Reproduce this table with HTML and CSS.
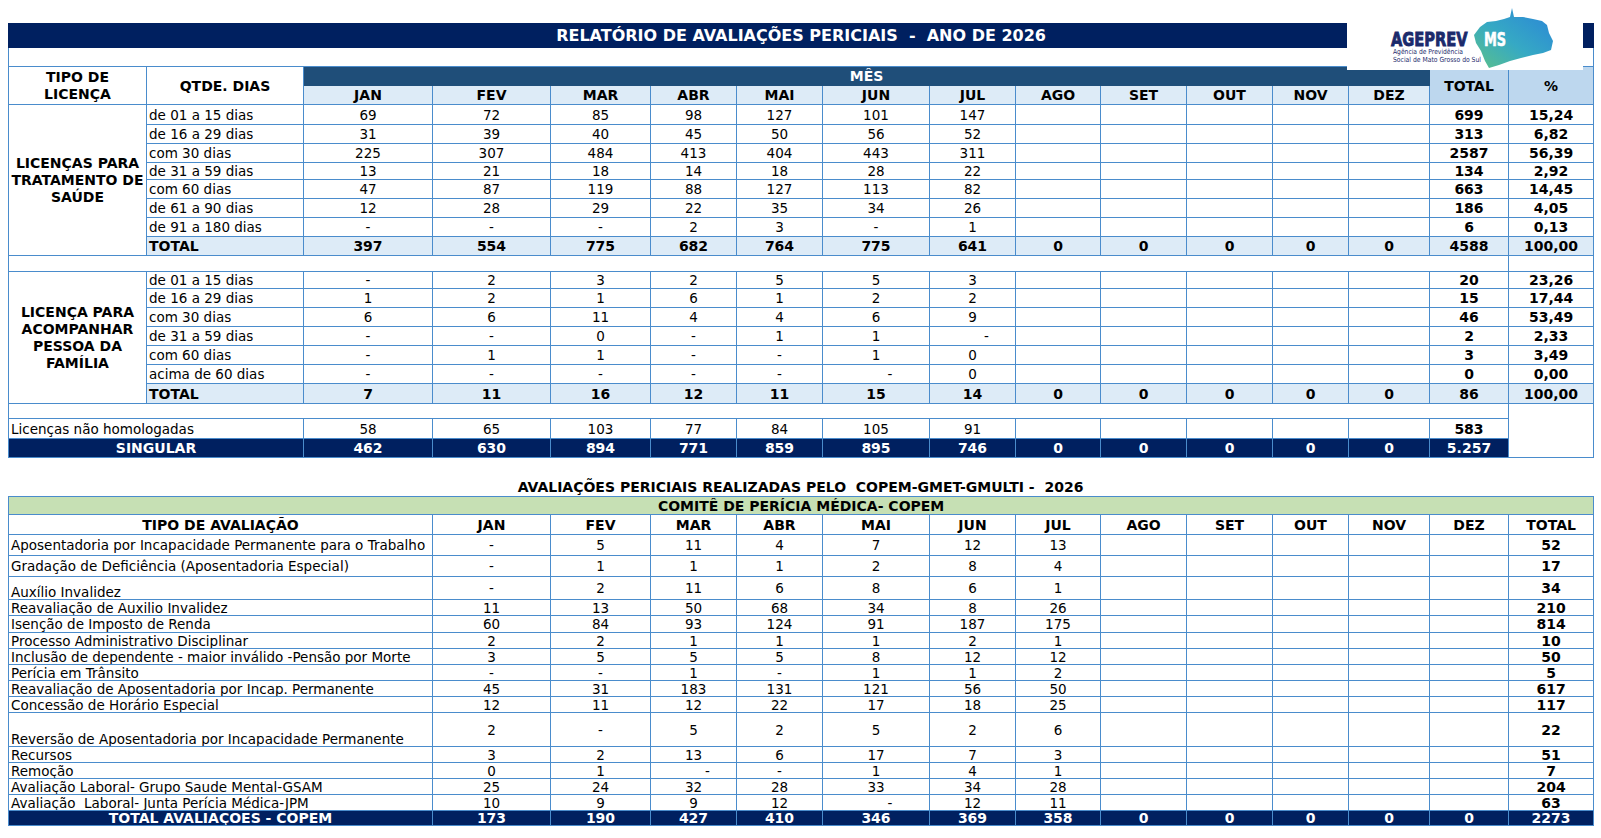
FILE: index.html
```html
<!DOCTYPE html>
<html lang="pt-BR">
<head>
<meta charset="utf-8">
<title>Relatório de Avaliações Periciais - 2026</title>
<link rel="stylesheet" href="styles.css">
</head>
<body>
<div class="page">
  <div class="report">
    <table class="grid">
      <colgroup>
        <col class="c-tipo"><col class="c-qtd"><col class="c-jan"><col class="c-fev"><col class="c-mar"><col class="c-abr"><col class="c-mai"><col class="c-jun"><col class="c-jul"><col class="c-ago"><col class="c-set"><col class="c-out"><col class="c-nov"><col class="c-dez"><col class="c-tot"><col class="c-pct">
      </colgroup>
      <tr class="h24"><td colspan="16" class="title">RELATÓRIO DE AVALIAÇÕES PERICIAIS &nbsp;- &nbsp;ANO DE 2026</td></tr>
      <tr class="h19"><td colspan="16"></td></tr>
      <tr class="h19">
        <th rowspan="2" class="grp">TIPO DE<br>LICENÇA</th>
        <th rowspan="2">QTDE. DIAS</th>
        <th colspan="12" class="mes">MÊS</th>
        <th rowspan="2" class="toth">TOTAL</th>
        <th rowspan="2" class="toth">%</th>
      </tr>
      <tr class="h19 months">
        <th>JAN</th><th>FEV</th><th>MAR</th><th>ABR</th><th>MAI</th><th>JUN</th><th>JUL</th><th>AGO</th><th>SET</th><th>OUT</th><th>NOV</th><th>DEZ</th>
      </tr>

      <tr class="h20">
        <td rowspan="8" class="grp">LICENÇAS PARA<br>TRATAMENTO DE<br>SAÚDE</td>
        <td class="lbl">de 01 a 15 dias</td>
        <td>69</td><td>72</td><td>85</td><td>98</td><td>127</td><td>101</td><td>147</td>
        <td></td><td></td><td></td><td></td><td></td>
        <td class="b">699</td><td class="b">15,24</td>
      </tr>
      <tr class="h19">
        <td class="lbl">de 16 a 29 dias</td>
        <td>31</td><td>39</td><td>40</td><td>45</td><td>50</td><td>56</td><td>52</td>
        <td></td><td></td><td></td><td></td><td></td>
        <td class="b">313</td><td class="b">6,82</td>
      </tr>
      <tr class="h19">
        <td class="lbl">com 30 dias</td>
        <td>225</td><td>307</td><td>484</td><td>413</td><td>404</td><td>443</td><td>311</td>
        <td></td><td></td><td></td><td></td><td></td>
        <td class="b">2587</td><td class="b">56,39</td>
      </tr>
      <tr class="h17">
        <td class="lbl">de 31 a 59 dias</td>
        <td>13</td><td>21</td><td>18</td><td>14</td><td>18</td><td>28</td><td>22</td>
        <td></td><td></td><td></td><td></td><td></td>
        <td class="b">134</td><td class="b">2,92</td>
      </tr>
      <tr class="h19">
        <td class="lbl">com 60 dias</td>
        <td>47</td><td>87</td><td>119</td><td>88</td><td>127</td><td>113</td><td>82</td>
        <td></td><td></td><td></td><td></td><td></td>
        <td class="b">663</td><td class="b">14,45</td>
      </tr>
      <tr class="h19">
        <td class="lbl">de 61 a 90 dias</td>
        <td>12</td><td>28</td><td>29</td><td>22</td><td>35</td><td>34</td><td>26</td>
        <td></td><td></td><td></td><td></td><td></td>
        <td class="b">186</td><td class="b">4,05</td>
      </tr>
      <tr class="h19">
        <td class="lbl">de 91 a 180 dias</td>
        <td>-</td><td>-</td><td>-</td><td>2</td><td>3</td><td>-</td><td>1</td>
        <td></td><td></td><td></td><td></td><td></td>
        <td class="b">6</td><td class="b">0,13</td>
      </tr>
      <tr class="h19 tot">
        <td class="lbl">TOTAL</td>
        <td>397</td><td>554</td><td>775</td><td>682</td><td>764</td><td>775</td><td>641</td>
        <td>0</td><td>0</td><td>0</td><td>0</td><td>0</td>
        <td>4588</td><td>100,00</td>
      </tr>

      <tr class="h16"><td colspan="15"></td><td></td></tr>

      <tr class="h17">
        <td rowspan="7" class="grp">LICENÇA PARA<br>ACOMPANHAR<br>PESSOA DA<br>FAMÍLIA</td>
        <td class="lbl">de 01 a 15 dias</td>
        <td>-</td><td>2</td><td>3</td><td>2</td><td>5</td><td>5</td><td>3</td>
        <td></td><td></td><td></td><td></td><td></td>
        <td class="b">20</td><td class="b">23,26</td>
      </tr>
      <tr class="h19">
        <td class="lbl">de 16 a 29 dias</td>
        <td>1</td><td>2</td><td>1</td><td>6</td><td>1</td><td>2</td><td>2</td>
        <td></td><td></td><td></td><td></td><td></td>
        <td class="b">15</td><td class="b">17,44</td>
      </tr>
      <tr class="h19">
        <td class="lbl">com 30 dias</td>
        <td>6</td><td>6</td><td>11</td><td>4</td><td>4</td><td>6</td><td>9</td>
        <td></td><td></td><td></td><td></td><td></td>
        <td class="b">46</td><td class="b">53,49</td>
      </tr>
      <tr class="h19">
        <td class="lbl">de 31 a 59 dias</td>
        <td>-</td><td>-</td><td>0</td><td>-</td><td>1</td><td>1</td><td class="sh">-</td>
        <td></td><td></td><td></td><td></td><td></td>
        <td class="b">2</td><td class="b">2,33</td>
      </tr>
      <tr class="h19">
        <td class="lbl">com 60 dias</td>
        <td>-</td><td>1</td><td>1</td><td>-</td><td>-</td><td>1</td><td>0</td>
        <td></td><td></td><td></td><td></td><td></td>
        <td class="b">3</td><td class="b">3,49</td>
      </tr>
      <tr class="h19">
        <td class="lbl">acima de 60 dias</td>
        <td>-</td><td>-</td><td>-</td><td>-</td><td>-</td><td class="sh">-</td><td>0</td>
        <td></td><td></td><td></td><td></td><td></td>
        <td class="b">0</td><td class="b">0,00</td>
      </tr>
      <tr class="h20 tot">
        <td class="lbl">TOTAL</td>
        <td>7</td><td>11</td><td>16</td><td>12</td><td>11</td><td>15</td><td>14</td>
        <td>0</td><td>0</td><td>0</td><td>0</td><td>0</td>
        <td>86</td><td>100,00</td>
      </tr>

      <tr class="h15"><td colspan="15"></td><td rowspan="3"></td></tr>
      <tr class="h20">
        <td colspan="2" class="lbl">Licenças não homologadas</td>
        <td>58</td><td>65</td><td>103</td><td>77</td><td>84</td><td>105</td><td>91</td>
        <td></td><td></td><td></td><td></td><td></td>
        <td class="b">583</td>
      </tr>
      <tr class="h19 navy">
        <td colspan="2">SINGULAR</td>
        <td>462</td><td>630</td><td>894</td><td>771</td><td>859</td><td>895</td><td>746</td>
        <td>0</td><td>0</td><td>0</td><td>0</td><td>0</td>
        <td>5.257</td>
      </tr>
    </table>

    <div class="logo">
      <svg width="236" height="65" viewBox="0 0 236 65" aria-label="AGEPREV MS">
        <defs>
          <linearGradient id="msgrad" x1="0" y1="1" x2="1" y2="0">
            <stop offset="0" stop-color="#5cc189"/>
            <stop offset="0.45" stop-color="#36a9c4"/>
            <stop offset="1" stop-color="#2a84d8"/>
          </linearGradient>
        </defs>
        <path d="M127 30 L133 22 L140 17 L149 16 L157 14 L163 12 L165 3 L167 12 L176 12 L186 14 L195 16 L200 20 L202 28 L206 36 L204 45 L196 48 L186 50 L174 53 L163 56 L152 60 L142 63 L138 56 L134 46 L129 38 Z" fill="url(#msgrad)"/>
        <g transform="translate(44 41) scale(0.77 1)">
          <text x="0" y="0" class="lg-main">AGEPREV</text>
        </g>
        <g transform="translate(137 41) scale(0.68 1)">
          <text x="0" y="0" class="lg-ms">MS</text>
        </g>
        <text x="46" y="49" class="lg-sub" textLength="70" lengthAdjust="spacingAndGlyphs">Agência de Previdência</text>
        <text x="46" y="57" class="lg-sub" textLength="88" lengthAdjust="spacingAndGlyphs">Social de Mato Grosso do Sul</text>
      </svg>
    </div>
  </div>

  <div class="subtitle">AVALIAÇÕES PERICIAIS REALIZADAS PELO &nbsp;COPEM-GMET-GMULTI - &nbsp;2026</div>

  <table class="grid">
    <colgroup>
      <col class="c-tipo"><col class="c-qtd"><col class="c-jan"><col class="c-fev"><col class="c-mar"><col class="c-abr"><col class="c-mai"><col class="c-jun"><col class="c-jul"><col class="c-ago"><col class="c-set"><col class="c-out"><col class="c-nov"><col class="c-dez"><col class="c-tot"><col class="c-pct">
    </colgroup>
    <tr class="h18 green"><td colspan="16">COMITÊ DE PERÍCIA MÉDICA- COPEM</td></tr>
    <tr class="h20">
      <th colspan="3">TIPO DE AVALIAÇÃO</th>
      <th>JAN</th><th>FEV</th><th>MAR</th><th>ABR</th><th>MAI</th><th>JUN</th><th>JUL</th><th>AGO</th><th>SET</th><th>OUT</th><th>NOV</th><th>DEZ</th><th>TOTAL</th>
    </tr>
    <tr class="h21">
      <td colspan="3" class="lbl">Aposentadoria por Incapacidade Permanente para o Trabalho</td>
      <td>-</td><td>5</td><td>11</td><td>4</td><td>7</td><td>12</td><td>13</td>
      <td></td><td></td><td></td><td></td><td></td><td class="b">52</td>
    </tr>
    <tr class="h21">
      <td colspan="3" class="lbl">Gradação de Deficiência (Aposentadoria Especial)</td>
      <td>-</td><td>1</td><td>1</td><td>1</td><td>2</td><td>8</td><td>4</td>
      <td></td><td></td><td></td><td></td><td></td><td class="b">17</td>
    </tr>
    <tr class="h23">
      <td colspan="3" class="lbl low">Auxílio Invalidez</td>
      <td>-</td><td>2</td><td>11</td><td>6</td><td>8</td><td>6</td><td>1</td>
      <td></td><td></td><td></td><td></td><td></td><td class="b">34</td>
    </tr>
    <tr class="h16">
      <td colspan="3" class="lbl">Reavaliação de Auxilio Invalidez</td>
      <td>11</td><td>13</td><td>50</td><td>68</td><td>34</td><td>8</td><td>26</td>
      <td></td><td></td><td></td><td></td><td></td><td class="b">210</td>
    </tr>
    <tr class="h17">
      <td colspan="3" class="lbl">Isenção de Imposto de Renda</td>
      <td>60</td><td>84</td><td>93</td><td>124</td><td>91</td><td>187</td><td>175</td>
      <td></td><td></td><td></td><td></td><td></td><td class="b">814</td>
    </tr>
    <tr class="h16">
      <td colspan="3" class="lbl">Processo Administrativo Disciplinar</td>
      <td>2</td><td>2</td><td>1</td><td>1</td><td>1</td><td>2</td><td>1</td>
      <td></td><td></td><td></td><td></td><td></td><td class="b">10</td>
    </tr>
    <tr class="h16">
      <td colspan="3" class="lbl">Inclusão de dependente - maior inválido -Pensão por Morte</td>
      <td>3</td><td>5</td><td>5</td><td>5</td><td>8</td><td>12</td><td>12</td>
      <td></td><td></td><td></td><td></td><td></td><td class="b">50</td>
    </tr>
    <tr class="h16">
      <td colspan="3" class="lbl">Perícia em Trânsito</td>
      <td>-</td><td>-</td><td>1</td><td>-</td><td>1</td><td>1</td><td>2</td>
      <td></td><td></td><td></td><td></td><td></td><td class="b">5</td>
    </tr>
    <tr class="h16">
      <td colspan="3" class="lbl">Reavaliação de Aposentadoria por Incap. Permanente</td>
      <td>45</td><td>31</td><td>183</td><td>131</td><td>121</td><td>56</td><td>50</td>
      <td></td><td></td><td></td><td></td><td></td><td class="b">617</td>
    </tr>
    <tr class="h16">
      <td colspan="3" class="lbl">Concessão de Horário Especial</td>
      <td>12</td><td>11</td><td>12</td><td>22</td><td>17</td><td>18</td><td>25</td>
      <td></td><td></td><td></td><td></td><td></td><td class="b">117</td>
    </tr>
    <tr class="h34">
      <td colspan="3" class="lbl low">Reversão de Aposentadoria por Incapacidade Permanente</td>
      <td>2</td><td>-</td><td>5</td><td>2</td><td>5</td><td>2</td><td>6</td>
      <td></td><td></td><td></td><td></td><td></td><td class="b">22</td>
    </tr>
    <tr class="h16">
      <td colspan="3" class="lbl">Recursos</td>
      <td>3</td><td>2</td><td>13</td><td>6</td><td>17</td><td>7</td><td>3</td>
      <td></td><td></td><td></td><td></td><td></td><td class="b">51</td>
    </tr>
    <tr class="h16">
      <td colspan="3" class="lbl">Remoção</td>
      <td>0</td><td>1</td><td class="sh">-</td><td>-</td><td>1</td><td>4</td><td>1</td>
      <td></td><td></td><td></td><td></td><td></td><td class="b">7</td>
    </tr>
    <tr class="h16">
      <td colspan="3" class="lbl">Avaliação Laboral- Grupo Saude Mental-GSAM</td>
      <td>25</td><td>24</td><td>32</td><td>28</td><td>33</td><td>34</td><td>28</td>
      <td></td><td></td><td></td><td></td><td></td><td class="b">204</td>
    </tr>
    <tr class="h16">
      <td colspan="3" class="lbl">Avaliação &nbsp;Laboral- Junta Perícia Médica-JPM</td>
      <td>10</td><td>9</td><td>9</td><td>12</td><td class="sh">-</td><td>12</td><td>11</td>
      <td></td><td></td><td></td><td></td><td></td><td class="b">63</td>
    </tr>
    <tr class="h15 navy">
      <td colspan="3">TOTAL AVALIAÇÕES - COPEM</td>
      <td>173</td><td>190</td><td>427</td><td>410</td><td>346</td><td>369</td><td>358</td>
      <td>0</td><td>0</td><td>0</td><td>0</td><td>0</td><td>2273</td>
    </tr>
  </table>
</div>
</body>
</html>
```

FILE: styles.css
```css
html, body {
  margin: 0;
  padding: 0;
  background: #ffffff;
}

body {
  font-family: "DejaVu Sans", Verdana, "Liberation Sans", sans-serif;
  font-size: 13.5px;
  color: #000000;
}

.page {
  padding: 23px 0 0 8px;
  width: 1585px;
}

.report {
  position: relative;
}

.grid {
  border-collapse: collapse;
  table-layout: fixed;
  width: 1585px;
}

.grid td,
.grid th {
  border: 1px solid #4a8ccc;
  padding: 0 2px;
  line-height: 14px;
  text-align: center;
  vertical-align: middle;
  white-space: nowrap;
  overflow: hidden;
}

.grid th {
  font-weight: bold;
  font-size: 14px;
}

/* column widths */
.c-tipo { width: 138px; }
.c-qtd  { width: 157px; }
.c-jan  { width: 129px; }
.c-fev  { width: 118px; }
.c-mar  { width: 100px; }
.c-abr  { width: 86px; }
.c-mai  { width: 86px; }
.c-jun  { width: 107px; }
.c-jul  { width: 86px; }
.c-ago  { width: 85px; }
.c-set  { width: 86px; }
.c-out  { width: 86px; }
.c-nov  { width: 76px; }
.c-dez  { width: 81px; }
.c-tot  { width: 79px; }
.c-pct  { width: 85px; }

/* row heights */
.h15 { height: 15px; }
.h16 { height: 16px; }
.h17 { height: 17px; }
.h18 { height: 18px; }
.h19 { height: 19px; }
.h20 { height: 20px; }
.h21 { height: 21px; }
.h23 { height: 23px; }
.h24 { height: 24px; }
.h34 { height: 34px; }

.grid .title {
  background: #002060;
  color: #ffffff;
  font-weight: bold;
  font-size: 16px;
  border-color: #002060;
}

.grid .mes {
  background: #1f4e79;
  color: #ffffff;
  border-color: #1f4e79;
}

.months th {
  background: #ddebf7;
}

.grid .toth {
  background: #bdd7ee;
}

.grid .grp {
  font-weight: bold;
  font-size: 14px;
  line-height: 17px;
}

.grid .lbl {
  text-align: left;
  padding-left: 2px;
}

.grid .low {
  vertical-align: bottom;
}

.grid .b {
  font-weight: bold;
  font-size: 14px;
}

.grid .sh {
  padding-left: 30px;
}

.tot td {
  background: #ddebf7;
  font-weight: bold;
  font-size: 14px;
}

.navy td {
  background: #002060;
  color: #ffffff;
  font-weight: bold;
  font-size: 14px;
}

.green td {
  background: #c6e0b4;
  font-weight: bold;
  font-size: 14px;
}

.subtitle {
  margin-top: 20px;
  height: 18px;
  line-height: 18px;
  text-align: center;
  font-weight: bold;
  font-size: 14px;
}

/* logo overlay */
.logo {
  position: absolute;
  left: 1339px;
  top: -18px;
  width: 236px;
  height: 65px;
  background: #ffffff;
}

.logo svg {
  display: block;
}

.lg-main {
  font-family: "DejaVu Sans", sans-serif;
  font-weight: bold;
  font-size: 19px;
  fill: #1b2a6b;
  stroke: #1b2a6b;
  stroke-width: 0.9px;
}

.lg-ms {
  font-family: "DejaVu Sans", sans-serif;
  font-weight: bold;
  font-size: 19px;
  fill: #ffffff;
  stroke: #ffffff;
  stroke-width: 0.6px;
}

.lg-sub {
  font-family: "DejaVu Sans", sans-serif;
  font-size: 7px;
  fill: #1b2a6b;
}
```
